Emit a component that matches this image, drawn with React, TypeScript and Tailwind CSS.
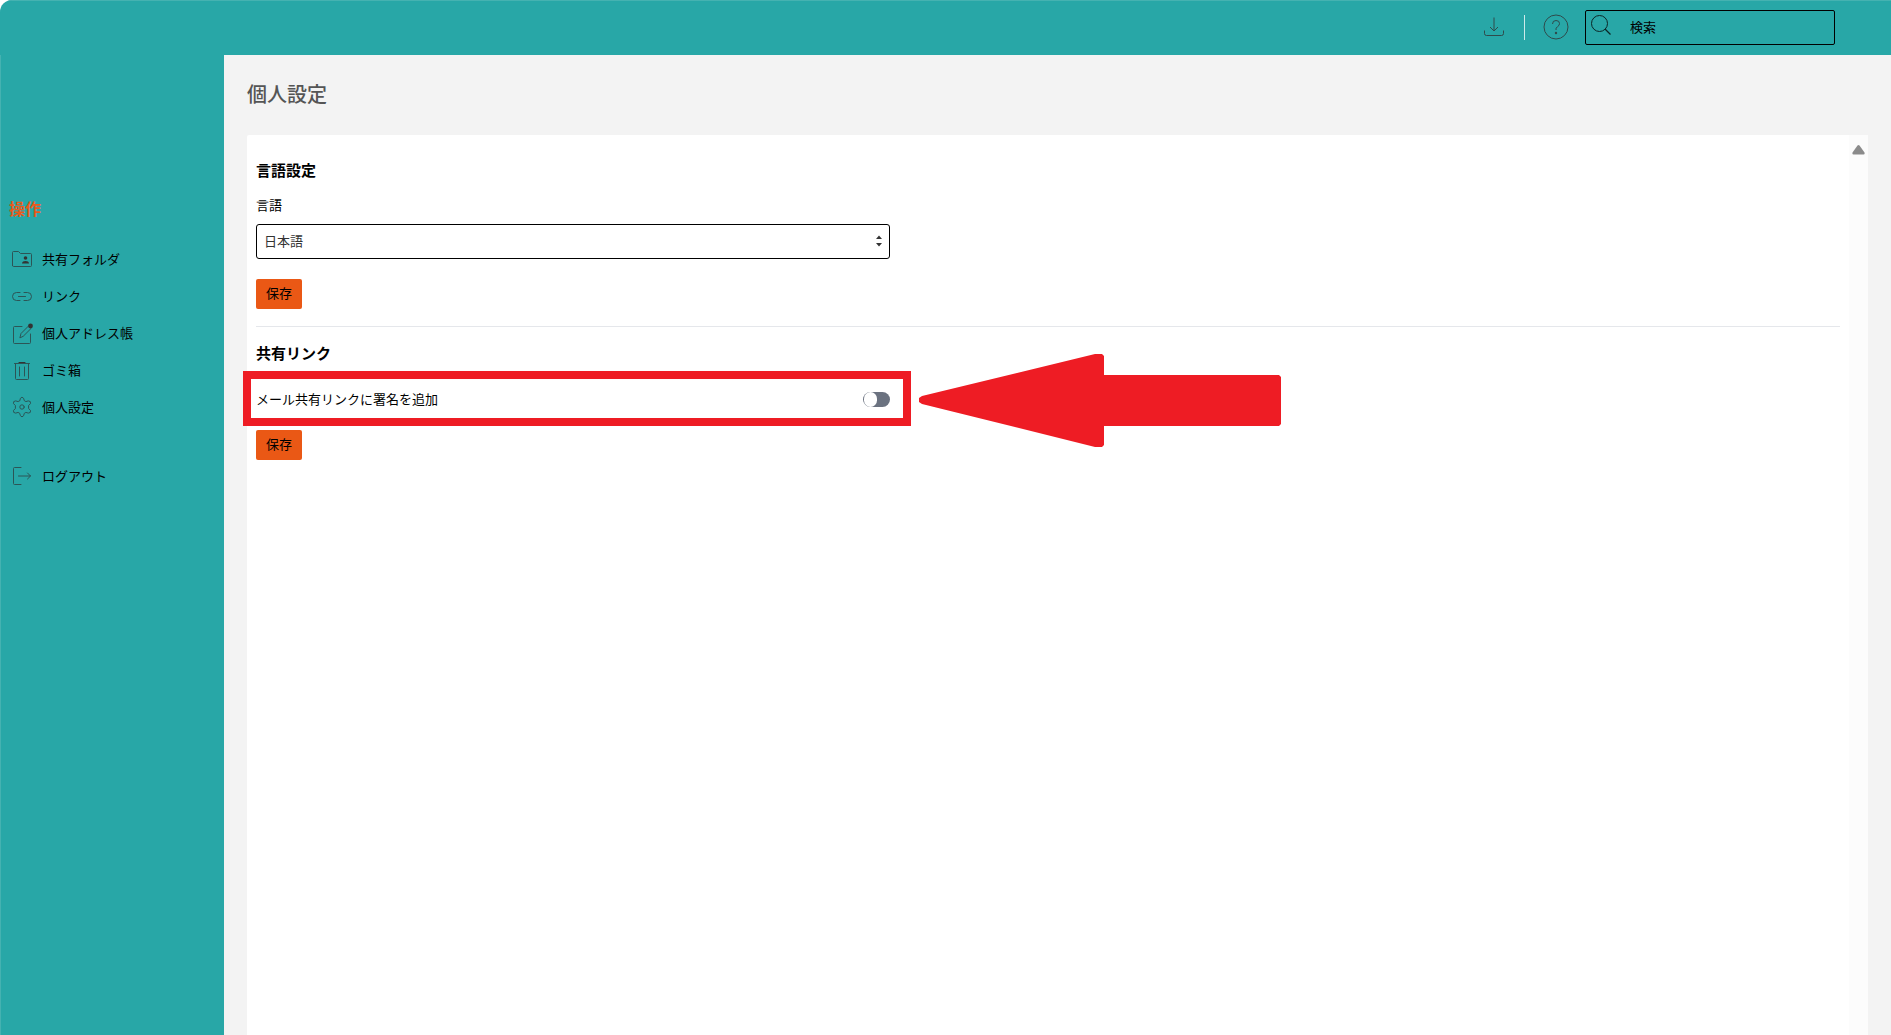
import { useState } from "react";
import type { ReactNode } from "react";

const Icon = ({ children }: { children: ReactNode }) => (
  <svg
    viewBox="0 0 22 22"
    className="w-[22px] h-[22px] shrink-0"
    fill="none"
    stroke="#2c5556"
    strokeWidth="1"
    strokeLinecap="round"
    strokeLinejoin="round"
    aria-hidden="true"
  >
    {children}
  </svg>
);

const menu = [
  {
    label: "共有フォルダ",
    icon: (
      <Icon>
        <path d="M1.5 17.5V4.5q0-1 1-1h5l2 2h10q1 0 1 1v11q0 1-1 1h-17q-1 0-1-1z" />
        <circle cx="14.5" cy="10" r="1.8" fill="#333" stroke="none" />
        <path d="M11 15.5q.4-2.4 3.5-2.4t3.5 2.4z" fill="#333" stroke="none" />
      </Icon>
    ),
  },
  {
    label: "リンク",
    icon: (
      <Icon>
        <path d="M9 7.5H5.5a4 4 0 0 0 0 8H9M13 7.5h3.5a4 4 0 0 1 0 8H13M7.5 11.5h7" />
      </Icon>
    ),
  },
  {
    label: "個人アドレス帳",
    icon: (
      <Icon>
        <path d="M11 4.5H3.5q-1 0-1 1v15q0 1 1 1h15q1 0 1-1V12" />
        <path d="M9 15.5l1-4 8-8 2.500 2.500-8 8z" />
        <circle cx="19.5" cy="4" r="2.4" fill="#333" stroke="none" />
      </Icon>
    ),
  },
  {
    label: "ゴミ箱",
    icon: (
      <Icon>
        <path d="M3.500 4.500h15M4.500 4.500v15q0 1 1 1h11q1 0 1-1v-15M8.500 8v9M13.500 8v9" />
        <path d="M8 3.500h6" stroke="#333" />
      </Icon>
    ),
  },
  {
    label: "個人設定",
    icon: (
      <Icon>
        <circle cx="11" cy="11" r="2.200" />
        <path d="M9.400 2.300q1.600-2.400 3.200 0l.7 2.400 1.600.9 2.400-.7q2.800 0 2.200 2.700L17.600 9.500v3l1.900 1.900q.6 2.700-2.200 2.700l-2.400-.7-1.600.9-.7 2.400q-1.600 2.400-3.200 0l-.7-2.400-1.600-.9-2.400.7q-2.800 0-2.200-2.700l1.900-1.900v-3L2.500 7.600Q1.900 4.900 4.700 4.900l2.400.7 1.600-.9z" />
      </Icon>
    ),
  },
  {
    label: "ログアウト",
    icon: (
      <Icon>
        <path d="M10 2.500H3.500q-1 0-1 1v15q0 1 1 1H10M7.500 11h12M16.500 8l3 3-3 3" />
      </Icon>
    ),
  },
];

const Header = () => (
  <header className="flex h-[55px] items-center justify-end border-t border-[#45b2b1] bg-[#28a7a7] pr-14 pb-0.5">
    <button type="button" aria-label="ダウンロード" className="mr-5">
      <svg viewBox="0 0 20 20" className="h-5 w-5" fill="none" stroke="#2f4a4b" aria-hidden="true">
        <path d="M10 .5v13M6 10l4 4 4-4M.5 13.500v3q0 2 2 2h15q2 0 2-2v-3" />
      </svg>
    </button>
    <div className="h-[25px] w-px bg-[#cdeaea]" />
    <button type="button" aria-label="ヘルプ" className="mr-4 ml-[18px]">
      <svg viewBox="0 0 26 26" className="h-[26px] w-[26px]" fill="none" stroke="#2f4a4b" aria-hidden="true">
        <circle cx="13" cy="13" r="12" />
        <path d="M9.500 10q0-3.500 3.500-3.500t3.500 3q0 2-2 3.200T13 16" />
        <circle cx="13" cy="19" r="1.200" fill="#2f4a4b" stroke="none" />
      </svg>
    </button>
    <label className="flex h-[35px] w-[250px] items-center rounded-xs border border-black pl-[5px]">
      <svg viewBox="0 0 20 20" className="mb-1 h-5 w-5 shrink-0" fill="none" stroke="#0b2626" aria-hidden="true">
        <circle cx="8.500" cy="8.500" r="8" />
        <path d="M14 14l5.500 5.500" strokeWidth="1.300" />
      </svg>
      <input
        type="search"
        aria-label="検索"
        placeholder="検索"
        className="ml-[19px] w-full min-w-0 bg-transparent text-[13px] outline-none placeholder:text-black"
      />
    </label>
  </header>
);

const Sidebar = () => (
  <nav className="w-56 shrink-0 border-l border-[#45b2b1] bg-[#28a7a7] pt-[141px] pl-2">
    <h2 className="text-base leading-6 font-bold text-[#ea5a1a]">操作</h2>
    <ul className="mt-5">
      {menu.map((item) => (
        <li key={item.label} className="pl-0.5 last:mt-8">
          <a href="#" className="flex h-[37px] items-center gap-[9px] text-[13px] text-black">
            {item.icon}
            {item.label}
          </a>
        </li>
      ))}
    </ul>
  </nav>
);

const SaveButton = () => (
  <button
    type="submit"
    className="flex h-[30px] w-[46px] items-center justify-center rounded-xs bg-[#ea5815] pb-0.5 text-[13px] text-black"
  >
    保存
  </button>
);

// red frame and arrow pointing at the signature switch
const Callout = () => (
  <>
    <div className="pointer-events-none absolute -top-5 -right-[21px] -left-[13px] h-[55px] border-8 border-[#ee1c24]" />
    <svg
      viewBox="0 0 362 93"
      className="pointer-events-none absolute -top-[37px] left-full ml-[29px] h-[93px] w-[362px]"
      fill="#ee1c24"
      aria-hidden="true"
    >
      <path d="M0 44l3-2L176 0h7l2 2v19h175l2 2v47l-2 2H185v19l-2 2h-7L3 50l-3-2z" />
    </svg>
  </>
);

const App = () => {
  const [signature, setSignature] = useState(false);

  return (
    <div className="flex min-h-screen flex-col overflow-hidden rounded-tl-xl bg-[#f3f3f3] font-['Noto_Sans_CJK_JP',sans-serif]">
      <Header />
      <div className="flex flex-1">
        <Sidebar />
        <main className="flex min-w-0 flex-1 flex-col px-[23px]">
          <h1 className="pt-[23px] pb-[25px] text-xl leading-8 font-medium text-[#555]">個人設定</h1>
          <div className="flex flex-1 rounded-tl-xs bg-white">
            <div className="min-w-0 flex-1 px-[9px] pt-[23px]">
              <form className="border-b border-[#e5e7eb] pb-[17px]" onSubmit={(e) => e.preventDefault()}>
                <h2 className="text-[15px] leading-6 font-bold">言語設定</h2>
                <label htmlFor="language" className="mt-[11px] block text-[13px] leading-6">
                  言語
                </label>
                <div className="relative mt-[7px] mb-5 w-2/5">
                  <select
                    id="language"
                    className="block h-[35px] w-full appearance-none rounded-[3px] border border-black bg-white pb-0.5 pl-[7px] text-[13px] text-[#333]"
                  >
                    <option>日本語</option>
                  </select>
                  <svg
                    viewBox="0 0 6 12"
                    className="pointer-events-none absolute top-[11px] right-2 h-3 w-1.5"
                    fill="#333"
                    aria-hidden="true"
                  >
                    <path d="M0 4l3-3.500L6 4zM0 8l3 3.500L6 8z" />
                  </svg>
                </div>
                <SaveButton />
              </form>
              <form className="pt-[14px]" onSubmit={(e) => e.preventDefault()}>
                <h2 className="text-[15px] leading-6 font-bold">共有リンク</h2>
                <div className="relative mt-[26px] mb-[23px] flex h-4 w-2/5 items-center justify-between">
                  <label htmlFor="signature" className="text-[13px]">
                    メール共有リンクに署名を追加
                  </label>
                  <input
                    id="signature"
                    type="checkbox"
                    role="switch"
                    checked={signature}
                    onChange={(e) => setSignature(e.target.checked)}
                    className="h-[15px] w-[27px] appearance-none rounded-full bg-[#6b7280] before:ml-px before:block before:h-[15px] before:w-[13px] before:rounded-full before:bg-white checked:before:ml-[13px]"
                  />
                  <Callout />
                </div>
                <SaveButton />
              </form>
            </div>
            <div className="flex w-[19px] justify-center bg-[#fcfcfc] pt-[10px]">
              <svg viewBox="0 0 13 10" className="h-[10px] w-[13px]" fill="#8b8b8b" aria-hidden="true">
                <path d="M5.500 .5q1-.8 2 0L12.500 7.500q.5 2-1 2h-10q-1.500 0-1-2z" />
              </svg>
            </div>
          </div>
        </main>
      </div>
    </div>
  );
};

export default App;
